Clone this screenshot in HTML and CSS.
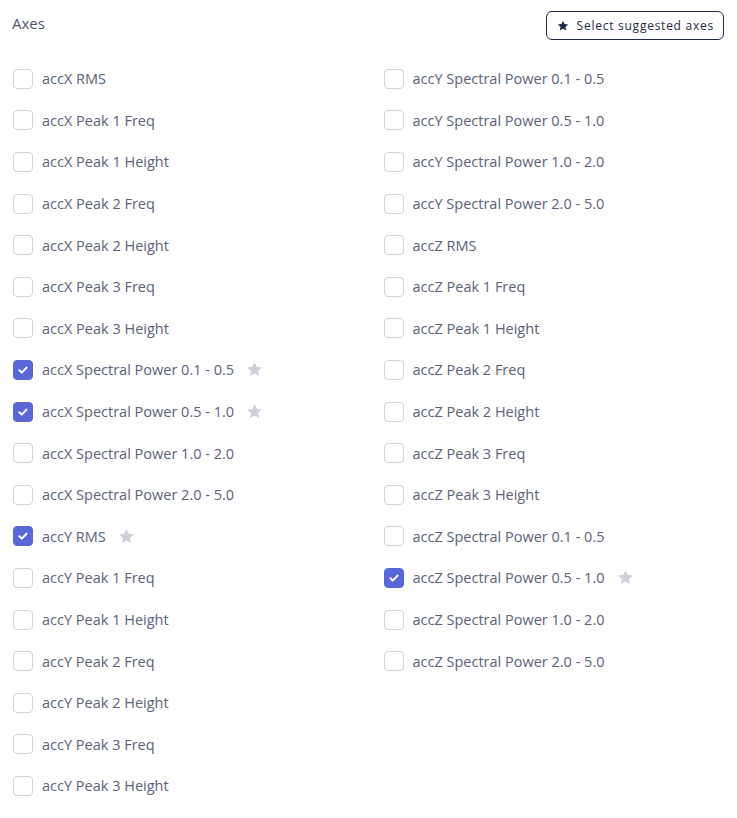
FILE: index.html
```html
<!DOCTYPE html>
<html>
<head>
<meta charset="utf-8">
<link rel="stylesheet" href="styles.css">
</head>
<body>
<div class="panel">
  <div class="header">
    <div class="title">Axes</div>
    <button class="suggest">
      <svg class="star" viewBox="0 0 24 24" width="12" height="12"><path d="M12 1.5l3.1 6.6 7.2.9-5.3 5 1.4 7.1L12 17.6l-6.4 3.5 1.4-7.1-5.3-5 7.2-.9z"/></svg>
      <span>Select suggested axes</span>
    </button>
  </div>
  <div class="grid">
    <div class="col">
      <label class="item"><span class="box"></span><span class="label">accX RMS</span></label>
      <label class="item"><span class="box"></span><span class="label">accX Peak 1 Freq</span></label>
      <label class="item"><span class="box"></span><span class="label">accX Peak 1 Height</span></label>
      <label class="item"><span class="box"></span><span class="label">accX Peak 2 Freq</span></label>
      <label class="item"><span class="box"></span><span class="label">accX Peak 2 Height</span></label>
      <label class="item"><span class="box"></span><span class="label">accX Peak 3 Freq</span></label>
      <label class="item"><span class="box"></span><span class="label">accX Peak 3 Height</span></label>
      <label class="item"><span class="box checked"><svg viewBox="0 0 20 20"><path d="M6 10.3l2.6 2.6L14 7.4"/></svg></span><span class="label">accX Spectral Power 0.1 - 0.5</span><svg class="sugg" viewBox="0 0 24 24"><path d="M12 1.5l3.1 6.6 7.2.9-5.3 5 1.4 7.1L12 17.6l-6.4 3.5 1.4-7.1-5.3-5 7.2-.9z"/></svg></label>
      <label class="item"><span class="box checked"><svg viewBox="0 0 20 20"><path d="M6 10.3l2.6 2.6L14 7.4"/></svg></span><span class="label">accX Spectral Power 0.5 - 1.0</span><svg class="sugg" viewBox="0 0 24 24"><path d="M12 1.5l3.1 6.6 7.2.9-5.3 5 1.4 7.1L12 17.6l-6.4 3.5 1.4-7.1-5.3-5 7.2-.9z"/></svg></label>
      <label class="item"><span class="box"></span><span class="label">accX Spectral Power 1.0 - 2.0</span></label>
      <label class="item"><span class="box"></span><span class="label">accX Spectral Power 2.0 - 5.0</span></label>
      <label class="item"><span class="box checked"><svg viewBox="0 0 20 20"><path d="M6 10.3l2.6 2.6L14 7.4"/></svg></span><span class="label">accY RMS</span><svg class="sugg" viewBox="0 0 24 24"><path d="M12 1.5l3.1 6.6 7.2.9-5.3 5 1.4 7.1L12 17.6l-6.4 3.5 1.4-7.1-5.3-5 7.2-.9z"/></svg></label>
      <label class="item"><span class="box"></span><span class="label">accY Peak 1 Freq</span></label>
      <label class="item"><span class="box"></span><span class="label">accY Peak 1 Height</span></label>
      <label class="item"><span class="box"></span><span class="label">accY Peak 2 Freq</span></label>
      <label class="item"><span class="box"></span><span class="label">accY Peak 2 Height</span></label>
      <label class="item"><span class="box"></span><span class="label">accY Peak 3 Freq</span></label>
      <label class="item"><span class="box"></span><span class="label">accY Peak 3 Height</span></label>
    </div>
    <div class="col">
      <label class="item"><span class="box"></span><span class="label">accY Spectral Power 0.1 - 0.5</span></label>
      <label class="item"><span class="box"></span><span class="label">accY Spectral Power 0.5 - 1.0</span></label>
      <label class="item"><span class="box"></span><span class="label">accY Spectral Power 1.0 - 2.0</span></label>
      <label class="item"><span class="box"></span><span class="label">accY Spectral Power 2.0 - 5.0</span></label>
      <label class="item"><span class="box"></span><span class="label">accZ RMS</span></label>
      <label class="item"><span class="box"></span><span class="label">accZ Peak 1 Freq</span></label>
      <label class="item"><span class="box"></span><span class="label">accZ Peak 1 Height</span></label>
      <label class="item"><span class="box"></span><span class="label">accZ Peak 2 Freq</span></label>
      <label class="item"><span class="box"></span><span class="label">accZ Peak 2 Height</span></label>
      <label class="item"><span class="box"></span><span class="label">accZ Peak 3 Freq</span></label>
      <label class="item"><span class="box"></span><span class="label">accZ Peak 3 Height</span></label>
      <label class="item"><span class="box"></span><span class="label">accZ Spectral Power 0.1 - 0.5</span></label>
      <label class="item"><span class="box checked"><svg viewBox="0 0 20 20"><path d="M6 10.3l2.6 2.6L14 7.4"/></svg></span><span class="label">accZ Spectral Power 0.5 - 1.0</span><svg class="sugg" viewBox="0 0 24 24"><path d="M12 1.5l3.1 6.6 7.2.9-5.3 5 1.4 7.1L12 17.6l-6.4 3.5 1.4-7.1-5.3-5 7.2-.9z"/></svg></label>
      <label class="item"><span class="box"></span><span class="label">accZ Spectral Power 1.0 - 2.0</span></label>
      <label class="item"><span class="box"></span><span class="label">accZ Spectral Power 2.0 - 5.0</span></label>
    </div>
  </div>
</div>
</body>
</html>
```
FILE: styles.css
```css
* { box-sizing: border-box; }
html, body { margin: 0; padding: 0; background: #fff; }
body { font-family: "Open Sans", "Noto Sans", sans-serif; color: #5b6278; }
.panel { padding: 11px 13px 0 12px; }
.header { display: flex; justify-content: space-between; align-items: flex-start; height: 47px; }
.title { font-size: 15px; color: #4e566c; line-height: 22px; margin-top: 1px; }
.suggest {
  display: flex; align-items: center; gap: 8px;
  height: 29px; padding: 0 9px 0 10px;
  border: 1px solid #1f2a48; border-radius: 6px; background: #fff;
  font-family: "Open Sans", sans-serif; font-size: 12px; color: #1f2a48;
  letter-spacing: 0.75px;
}
.suggest .star { fill: #1f2a48; }
.grid { display: grid; grid-template-columns: 1fr 1fr; column-gap: 30px; padding-left: 1px; }
.col { display: flex; flex-direction: column; }
.item { display: flex; align-items: center; height: 41.6px; font-size: 14.5px; }
.box {
  width: 20px; height: 20px; flex: none;
  border: 1px solid #cfd3dc; border-radius: 4px; background: #fff;
  margin-right: 9px; display: flex; align-items: center; justify-content: center;
}
.box.checked { background: #5a67d8; border-color: #5a67d8; }
.box svg { width: 20px; height: 20px; fill: none; stroke: #fff; stroke-width: 2.2; stroke-linecap: round; stroke-linejoin: round; }
.label { white-space: nowrap; }
.sugg { width: 17px; height: 17px; fill: #cdd1db; margin-left: 12px; }
```
